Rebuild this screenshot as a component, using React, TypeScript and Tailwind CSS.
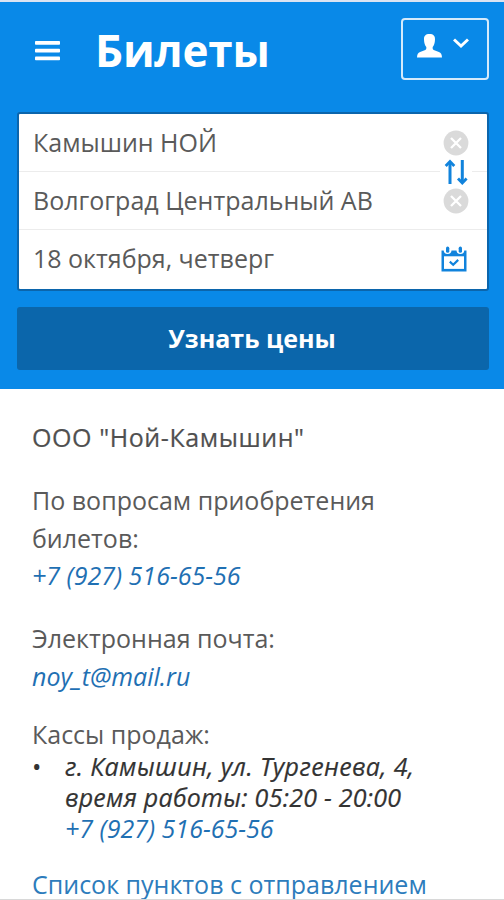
import type { ReactNode } from 'react';

function ClearButton() {
  return (
    <button type="button" aria-label="Очистить" className="block">
      <svg width="26" height="26" viewBox="0 0 26 26" className="block">
        <circle cx="13" cy="13" r="12.4" fill="#dadada" />
        <path d="M8 8l10 10M18 8L8 18" stroke="#fff" strokeWidth="2.3" />
      </svg>
    </button>
  );
}

function SwapIcon() {
  return (
    <svg width="24" height="26" viewBox="0 0 24 26" fill="none" className="block">
      <path d="M6 25V4M18.300 1v21" stroke="#1183dc" strokeWidth="3" />
      <path d="M1.700 7L6 2.500 10.300 7M14 19.500l4.300 4.500 4.300-4.500" stroke="#1183dc" strokeWidth="2.800" />
    </svg>
  );
}

function CalendarIcon() {
  return (
    <svg width="26" height="26" viewBox="0 0 26 26" className="block">
      <path d="M0.5 4.5h25v21H0.5z" fill="#1183dc" />
      <path d="M3 10.3h20v12.6H3z" fill="#fff" />
      <circle cx="6.6" cy="4" r="3.9" fill="#fff" />
      <circle cx="19.4" cy="4" r="3.9" fill="#fff" />
      <rect x="5" y="0.6" width="3.3" height="6.2" rx="1.65" fill="#1183dc" />
      <rect x="17.7" y="0.6" width="3.3" height="6.2" rx="1.65" fill="#1183dc" />
      <path d="M8.8 15.6l3.4 3.1 5-4.8" fill="none" stroke="#1183dc" strokeWidth="2.2" />
    </svg>
  );
}

function Phone() {
  return (
    <a href="tel:+79275166556" className="block italic text-[#1f70b3]">
      +7 (927) 516-65-56
    </a>
  );
}

function Field({ icon, children }: { icon: ReactNode; children: ReactNode }) {
  return (
    <div className="flex h-full items-center justify-between pr-[18px] pl-[14px]">
      <span>{children}</span>
      {icon}
    </div>
  );
}

export default function App() {
  return (
    <div className="flex h-[900px] w-[504px] flex-col overflow-hidden border-t-2 border-b border-t-[#dbe3f2] border-b-[#d8d8d8] bg-white font-['Open_Sans','Noto_Sans',sans-serif] text-[25px] text-[#5a5a5a]">
      <header className="h-[387px] shrink-0 bg-[#0989e8] pr-[15px] pl-[17px]">
        <div className="flex h-[110px] items-start pl-[18px]">
          <button type="button" aria-label="Меню" className="mt-[38px] block">
            <svg width="25" height="22" viewBox="0 0 25 22" fill="#fff" className="block">
              <rect y="0.900" width="25" height="3.800" rx="0.800" />
              <rect y="8.700" width="25" height="3.800" rx="0.800" />
              <rect y="16.500" width="25" height="3.800" rx="0.800" />
            </svg>
          </button>
          <h1 className="mt-[18px] ml-[35px] text-[44px] leading-[60px] font-bold tracking-[-0.2px] text-white">Билеты</h1>
          <button
            type="button"
            aria-label="Профиль"
            className="mt-4 ml-auto flex h-[62px] w-[88px] items-start rounded-[4px] border-2 border-[#d5eafb] pt-[14px] pl-[14px]"
          >
            <svg width="25" height="24" viewBox="0 0 25 24" fill="#fff" className="block">
              <path d="M12.500 0C8.600 0 6.800 2 7 5.400c.1 3.300 1 6.200 2.300 7.700.2 1.600-.1 2.500-1 2.900L3.100 18C1 19 .2 20.100 0 23.500h25c-.2-3.400-1-4.500-3.100-5.500l-5.200-2c-.9-.4-1.200-1.300-1-2.900C17 11.600 17.900 8.700 18 5.400 18.200 2 16.400 0 12.500 0z" />
            </svg>
            <svg width="16" height="11" viewBox="0 0 16 11" fill="none" className="mt-[4px] ml-[11px] block">
              <path d="M1 1.500l7 6.500 7-6.500" stroke="#fff" strokeWidth="3" />
            </svg>
          </button>
        </div>

        <form>
          <div className="relative h-[179px] rounded-[3px] border-2 border-[#0b65ac] bg-white">
            <div className="h-[58px] border-b border-[#ececec]">
              <Field icon={<ClearButton />}>Камышин НОЙ</Field>
            </div>
            <div className="h-[58px] border-b border-[#ececec]">
              <Field icon={<ClearButton />}>Волгоград Центральный АВ</Field>
            </div>
            <div className="h-[57px]">
              <Field icon={<div className="mr-[2px]"><CalendarIcon /></div>}>18 октября, четверг</Field>
            </div>
            <button type="button" aria-label="Поменять местами" className="absolute top-[45px] right-[15px] bg-white px-1">
              <SwapIcon />
            </button>
          </div>
          <button
            type="button"
            className="mt-4 block h-[63px] w-full rounded-[3px] bg-[#0b66ab] pr-[2px] text-[25px] font-bold text-white"
          >
            Узнать цены
          </button>
        </form>
      </header>

      <main className="px-8 pt-[30px]">
        <h2 className="leading-9 tracking-[0.58px] text-[#505050] [-webkit-text-stroke:0.2px_#505050]">ООО "Ной-Камышин"</h2>
        <p className="mt-[26px] leading-[38px]">
          По вопросам приобретения
          <br />
          билетов:
        </p>
        <div className="leading-9"><Phone /></div>
        <p className="mt-[26px] leading-[38px]">Электронная почта:</p>
        <a href="mailto:noy_t@mail.ru" className="block leading-[38px] italic text-[#1f70b3]">noy_t@mail.ru</a>
        <p className="mt-[23px] leading-8">Кассы продаж:</p>
        <ul className="mt-px leading-[31px]">
          <li className="flex">
            <span className="w-[33px] text-[#333]">•</span>
            <div>
              <p className="italic text-[#333] [-webkit-text-stroke:0.2px_#333]">
                <span className="tracking-[0.36px]">г. Камышин, ул. Тургенева, 4,</span>
                <br />
                <span className="tracking-[0.25px]">время работы: 05:20 - 20:00</span>
              </p>
              <Phone />
            </div>
          </li>
        </ul>
        <a href="#points" className="mt-[25px] block leading-[31px] text-[#2d7cbc]">Список пунктов с отправлением</a>
      </main>
    </div>
  );
}
